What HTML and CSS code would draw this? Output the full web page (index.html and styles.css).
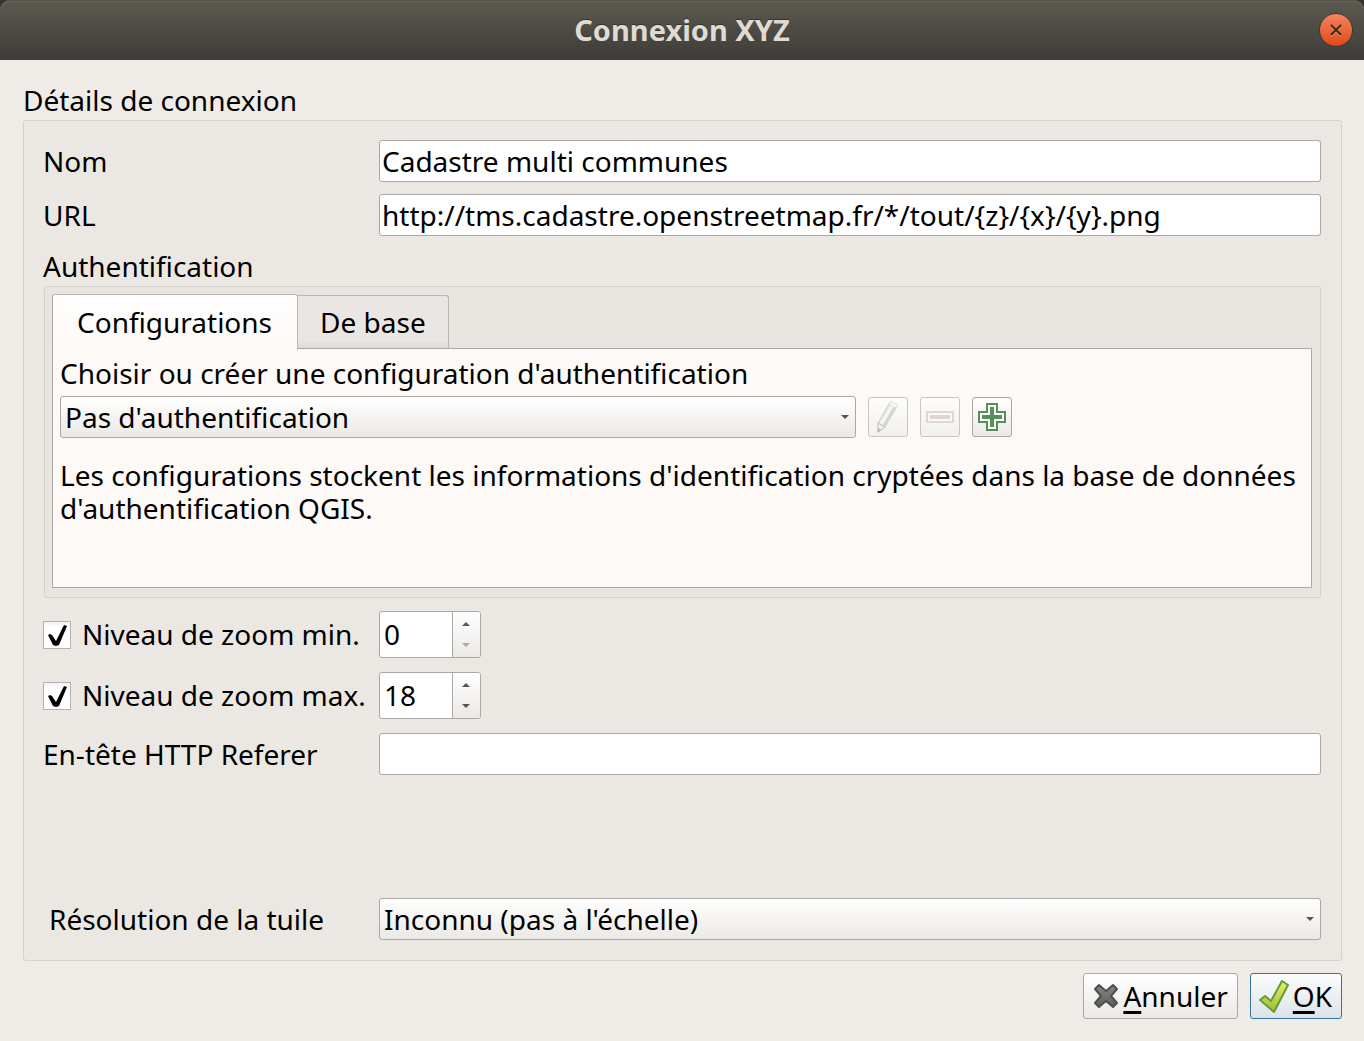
FILE: index.html
```html
<!DOCTYPE html>
<html lang="fr">
<head>
<meta charset="utf-8">
<meta name="viewport" content="width=device-width, initial-scale=1">
<title>Connexion XYZ</title>
<link rel="stylesheet" href="styles.css">
</head>
<body>
<form class="dialog" onsubmit="return false">
  <header class="titlebar">
    <h1 class="title">Connexion XYZ</h1>
    <button class="close" type="button" aria-label="Fermer">
      <svg width="14" height="14" viewBox="0 0 14 14"><path d="M2 3l10 10M12 3L2 13" stroke="#f79a76" stroke-width="2"/><path d="M2 2l10 10M12 2L2 12" stroke="#3a2a14" stroke-width="2"/></svg>
    </button>
  </header>

  <main class="content">
    <h2 class="heading">Détails de connexion</h2>
    <section class="group details">
      <div class="row">
        <label for="name">Nom</label>
        <input class="field" id="name" type="text" value="Cadastre multi communes">
      </div>
      <div class="row">
        <label for="url">URL</label>
        <input class="field" id="url" type="text" value="http://tms.cadastre.openstreetmap.fr/*/tout/{z}/{x}/{y}.png">
      </div>

      <h3 class="heading subheading">Authentification</h3>
      <div class="group auth">
        <div class="tabs" role="tablist">
          <button class="tab active" type="button" role="tab" aria-selected="true">Configurations</button>
          <button class="tab" type="button" role="tab" aria-selected="false">De base</button>
        </div>
        <div class="pane" role="tabpanel">
          <label for="config">Choisir ou créer une configuration d'authentification</label>
          <div class="config-row">
            <div class="combo config-combo">
              <select class="select" id="config"><option>Pas d'authentification</option></select>
              <svg class="arrow" width="8" height="4" viewBox="0 0 8 4"><path d="M0 0h8L4 4z" fill="#555"/></svg>
            </div>
            <button class="tool" type="button" disabled aria-label="Modifier">
              <svg width="28" height="34" viewBox="0 0 28 34">
                <path d="M4 23L15 4l7 4-11 19-7 5z" fill="#e7e6e1" stroke="#cfcfca"/>
                <path d="M15 4l2-3 7 4-2 3z" fill="#f7f7f6" stroke="#dededb"/>
                <path d="M7 24L18 6" stroke="#f6f5f0" stroke-width="3"/>
                <path d="M10 26L20 8" stroke="#d5d6cb" stroke-width="2"/>
                <path d="M4 23l7 4-7 5z" fill="#eeeeec" stroke="#c5c6c6"/>
                <path d="M4 28l3 2-3 3z" fill="#b5b9bb"/>
              </svg>
            </button>
            <button class="tool" type="button" disabled aria-label="Supprimer">
              <svg width="28" height="12" viewBox="0 0 28 12"><path d="M1 1h26v10H1z" fill="#fbf8f8" stroke="#e1d6d6" stroke-width="2"/><path d="M4 4h20v4H4z" fill="#dfd2d2"/></svg>
            </button>
            <button class="tool" type="button" aria-label="Ajouter">
              <svg width="28" height="28" viewBox="0 0 28 28"><path d="M9 1h10v8h8v10h-8v8H9v-8H1V9h8z" fill="#fff" stroke="#588f58" stroke-width="2"/><path d="M12 4h4v8h8v4h-8v8h-4v-8H4v-4h8z" fill="#588f58"/></svg>
            </button>
          </div>
          <p class="hint">Les configurations stockent les informations d'identification cryptées dans la base de données d'authentification QGIS.</p>
        </div>
      </div>

      <div class="row zoom">
        <label class="check" for="use-min"><input class="box" id="use-min" type="checkbox" checked>Niveau de zoom min.</label>
        <div class="spin">
          <input class="number" type="number" min="0" value="0" aria-label="Niveau de zoom min.">
          <div class="steps">
            <button class="step" type="button" aria-label="Augmenter"><svg width="8" height="4" viewBox="0 0 8 4"><path d="M0 4h8L4 0z" fill="#555"/></svg></button>
            <button class="step" type="button" disabled aria-label="Diminuer"><svg width="8" height="4" viewBox="0 0 8 4"><path d="M0 0h8L4 4z" fill="#aaa"/></svg></button>
          </div>
        </div>
      </div>
      <div class="row zoom">
        <label class="check" for="use-max"><input class="box" id="use-max" type="checkbox" checked>Niveau de zoom max.</label>
        <div class="spin">
          <input class="number" type="number" min="0" value="18" aria-label="Niveau de zoom max.">
          <div class="steps">
            <button class="step" type="button" aria-label="Augmenter"><svg width="8" height="4" viewBox="0 0 8 4"><path d="M0 4h8L4 0z" fill="#555"/></svg></button>
            <button class="step" type="button" aria-label="Diminuer"><svg width="8" height="4" viewBox="0 0 8 4"><path d="M0 0h8L4 4z" fill="#555"/></svg></button>
          </div>
        </div>
      </div>
      <div class="row">
        <label for="referer">En-tête HTTP Referer</label>
        <input class="field" id="referer" type="text">
      </div>
      <div class="row resolution">
        <label class="indented" for="resolution">Résolution de la tuile</label>
        <div class="combo">
          <select class="select" id="resolution"><option>Inconnu (pas à l'échelle)</option></select>
          <svg class="arrow" width="8" height="4" viewBox="0 0 8 4"><path d="M0 0h8L4 4z" fill="#555"/></svg>
        </div>
      </div>
    </section>

    <footer class="actions">
      <button class="action" type="button">
        <svg width="26" height="26" viewBox="0 0 26 26"><defs><linearGradient id="gray" x1="0" y1="0" x2="0" y2="1"><stop offset="0" stop-color="#858785"/><stop offset="1" stop-color="#5c5e5b"/></linearGradient></defs><path d="M6 2l7 6 7-6 4 4-6 7 6 7-4 4-7-6-7 6-4-4 6-7-6-7z" fill="url(#gray)" stroke="#4e504e" stroke-width="2" stroke-linejoin="round"/></svg>
        <span><span class="key">A</span>nnuler</span>
      </button>
      <button class="action default" type="submit">
        <svg width="30" height="33" viewBox="0 0 30 33"><defs><linearGradient id="green" x1="0" y1="0" x2="0" y2="1"><stop offset="0" stop-color="#e4f26b"/><stop offset="1" stop-color="#9dbd32"/></linearGradient></defs><path d="M1 20l5-4 6 5L23 1l6 4-14 27z" fill="url(#green)" stroke="#659b3b" stroke-width="2" stroke-linejoin="round"/></svg>
        <span><span class="key">O</span>K</span>
      </button>
    </footer>
  </main>
</form>
</body>
</html>
```
FILE: styles.css
```css
* { box-sizing: border-box; }

body {
  margin: 0;
  background: #34332f;
  color: #000;
  font: 28px/33px "Noto Sans", sans-serif;
}

button, input, select { font: inherit; color: inherit; margin: 0; }
svg { display: block; flex: none; }

.dialog {
  min-height: 100vh;
  display: flex;
  flex-direction: column;
}

.titlebar {
  display: grid;
  grid-template-columns: 34px 1fr 34px;
  align-items: center;
  height: 60px;
  padding: 0 11px 1px;
  border-radius: 10px 10px 0 0;
  background: linear-gradient(#5c5a50, #3d3c38);
  box-shadow: inset 0 1px #55534a, inset 0 2px #69675b;
}
.title {
  grid-column: 2;
  margin: 0;
  color: #dfdbd2;
  font-size: 29px;
  font-weight: 700;
  text-align: center;
  text-shadow: 0 -1px #33322e;
}
.close {
  display: flex;
  align-items: center;
  justify-content: center;
  width: 34px;
  height: 34px;
  padding: 0;
  border: 1px solid #3a3935;
  border-radius: 50%;
  background: linear-gradient(#f5835f, #de4a18);
}

.content {
  flex: 1;
  display: flex;
  flex-direction: column;
  padding: 24px 22px 22px 23px;
  background: #efebe7;
}
.heading { margin: 0; font-size: 28px; font-weight: 400; }

.group {
  border: 1px solid #d5d2ce;
  border-radius: 3px;
  background: #ebe8e3;
}
.details {
  flex: 1;
  display: flex;
  flex-direction: column;
  margin-top: 3px;
  padding: 19px 20px 20px 19px;
}
.row {
  display: grid;
  grid-template-columns: 324px 1fr;
  gap: 12px;
  align-items: center;
  margin-bottom: 12px;
}
.indented { padding-left: 6px; }
.field {
  width: 100%;
  height: 42px;
  padding: 0 2px;
  border: 1px solid #aaa7a4;
  border-radius: 3px;
  background: #fff;
}

.subheading { margin-top: 2px; }
.auth {
  margin: 3px 0 13px 1px;
  padding: 7px 8px 9px 7px;
  background: #e8e5e1;
}
.tabs { display: flex; align-items: flex-end; }
.tab {
  height: 53px;
  padding: 0 22px;
  border: 1px solid #bab7b4;
  border-left: 0;
  border-bottom: 0;
  border-radius: 0 3px 0 0;
  background: linear-gradient(#e9e6e3 85%, #dbd8d5);
}
.tab.active {
  z-index: 1;
  height: 56px;
  padding: 0 25px 0 24px;
  border-left: 1px solid #aaa7a4;
  border-radius: 3px 3px 0 0;
  margin-bottom: -2px;
  background: linear-gradient(#fff, #fdf9f6);
}
.pane {
  min-height: 240px;
  padding: 8px 7px;
  border: 1px solid #aaa7a4;
  background: #fdf9f6;
}
.pane > label { display: block; }
.config-row {
  display: flex;
  align-items: center;
  gap: 12px;
  margin: 6px 0 21px;
}
.combo { position: relative; }
.config-combo { width: 64%; }
.select {
  display: block;
  width: 100%;
  height: 42px;
  padding: 0 24px 0 4px;
  appearance: none;
  border: 1px solid #aaa7a4;
  border-radius: 3px;
  background: linear-gradient(#fff, #ebe9e6);
}
.arrow { position: absolute; right: 7px; top: 19px; pointer-events: none; }
.tool {
  display: flex;
  align-items: center;
  justify-content: center;
  width: 40px;
  height: 40px;
  padding: 0;
  border: 1px solid #aaa7a4;
  border-radius: 3px;
  background: linear-gradient(#fff, #ebe9e6);
}
.tool:disabled { border-color: #c8c5c2; background: linear-gradient(#fdfdfc, #f2f0ed); }
.hint { margin: 0; }

.zoom { margin-bottom: 14px; }
.check { display: flex; align-items: center; gap: 11px; white-space: nowrap; }
.box {
  flex: none;
  width: 28px;
  height: 28px;
  appearance: none;
  border: 1px solid #b5b2af;
  background: linear-gradient(#f1f1f1, #fff 20%);
}
.box:checked {
  background: url("data:image/svg+xml,%3Csvg xmlns='http://www.w3.org/2000/svg' viewBox='0 0 26 26'%3E%3Cpath d='M4 13l2-1 2 1 4 6 8-16 3 1-8 19-3 1-3-1z'/%3E%3C/svg%3E"), linear-gradient(#f1f1f1, #fff 20%);
}
.spin {
  display: flex;
  width: 102px;
  height: 47px;
  border: 1px solid #aaa7a4;
  border-radius: 3px;
  background: #fff;
  overflow: hidden;
}
.number {
  flex: 1;
  min-width: 0;
  padding: 0 4px;
  border: 0;
  background: none;
  appearance: textfield;
}
.number::-webkit-inner-spin-button { appearance: none; }
.steps {
  display: flex;
  flex-direction: column;
  width: 28px;
  padding: 2px 1px 2px 0;
  border-left: 1px solid #aaa7a4;
  background: linear-gradient(#fff, #ebe9e6);
}
.step {
  flex: 1;
  display: flex;
  align-items: center;
  justify-content: center;
  padding: 0;
  border: 0;
  background: none;
}
.resolution { margin-top: auto; margin-bottom: 0; }

.actions {
  display: flex;
  justify-content: flex-end;
  gap: 12px;
  margin-top: 12px;
}
.action {
  display: flex;
  align-items: center;
  gap: 4px;
  height: 46px;
  padding: 0 9px;
  border: 1px solid #aaa7a4;
  border-radius: 3px;
  background: linear-gradient(#fff, #ebe9e6);
}
.default {
  padding-left: 8px;
  border-color: #3276a0;
  background: linear-gradient(#fbfdfd, #dce3e7);
}
.key {
  text-decoration: underline 3px;
  text-underline-offset: 4px;
  text-decoration-skip-ink: none;
}
```
